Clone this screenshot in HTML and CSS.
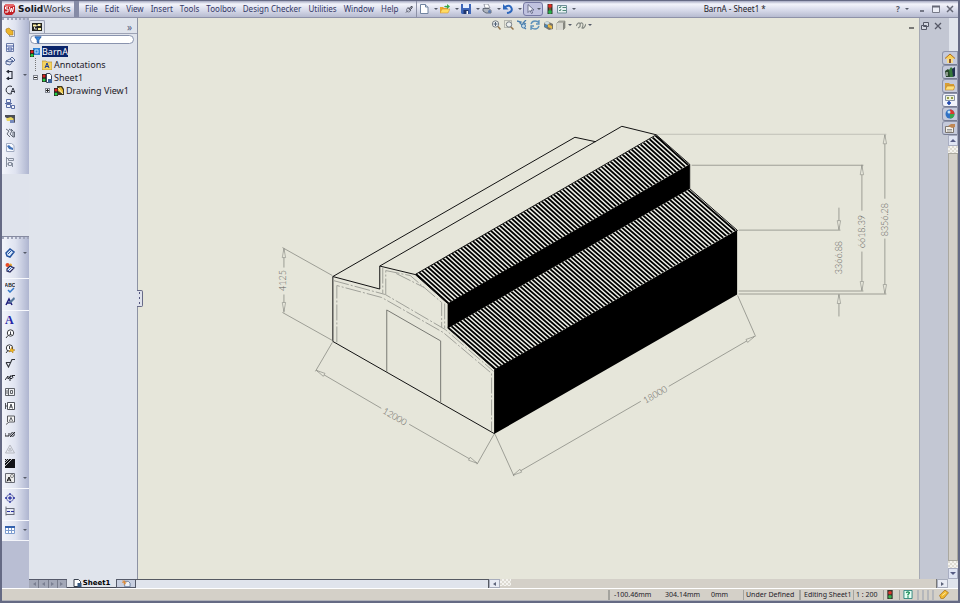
FILE: index.html
```html
<!DOCTYPE html>
<html lang="en">
<head>
<meta charset="utf-8">
<title>BarnA - Sheet1</title>
<link rel="stylesheet" href="styles.css">
</head>
<body>
<header class="titlebar">
  <div class="brand">
    <svg class="logo" viewBox="0 0 12 12" aria-hidden="true"><path d="M1 3 3 1h7l2 2v6l-3 3H3L1 10z" fill="#c11f25"/><path d="M1 3 3 1h7l2 2-5 1z" fill="#e7676a"/><path d="M5 4H2.500v2H5v3H2M6.500 4l1 5 1-4 1 4 1.200-5" fill="none" stroke="#fff"/></svg>
    <span><b>Solid</b>Works</span>
  </div>
  <nav class="menu">
    <button>File</button><button>Edit</button><button>View</button><button>Insert</button><button>Tools</button><button>Toolbox</button><button>Design Checker</button><button>Utilities</button><button>Window</button><button>Help</button>
    <button aria-label="Pin menu"><svg class="pin" viewBox="0 0 8 8"><path d="M1 7.500 3 5.500M3 2.500 6 6M4 4 6 1.500Q8 1 7 3L5 5" fill="#b5b7c6" stroke="#4c4e5c"/><circle cx="3.500" cy="5" r="2" fill="none" stroke="#666978" stroke-width=".8"/></svg></button>
  </nav>
  <div class="tools">
    <button class="split" aria-label="New"><svg viewBox="0 0 10 10"><path d="M1.500.5h5l2.500 2.500v6.500h-7.500z" fill="#fff" stroke="#7184a0"/><path d="M6.500.5v2.500h2.500" fill="#dce5f2" stroke="#7184a0"/></svg><i class="caret"></i></button>
    <button class="split" aria-label="Open"><svg viewBox="0 0 10 10"><path d="M0 3h3l1 1h4v5H0z" fill="#e9a72c"/><path d="M2 5h8L8 9H0z" fill="#ffdc62" stroke="#c9862a" stroke-width=".5"/><path d="M4 3q1-2 3-1V0l3 2.500L7 5V3.500z" fill="#3ba947"/></svg><i class="caret"></i></button>
    <button class="split" aria-label="Save"><svg viewBox="0 0 10 10"><path d="M0 0h10v10H1L0 9z" fill="#3e66b8"/><path d="M2 0h6v4H2z" fill="#e5efff"/><path d="M2.500 6h5v4h-5z" fill="#20376d"/><path d="M5.500 7h1.500v3H5.500z" fill="#fff"/></svg><i class="caret"></i></button>
    <button class="split" aria-label="Print"><svg viewBox="0 0 10 10"><path d="M2 0h4l2 4H3z" fill="#fff" stroke="#747988" stroke-width=".7"/><path d="M1 4.500h6l2 2v2.500H4L1 7z" fill="#aeb4bf" stroke="#4f5563" stroke-width=".8"/><circle cx="7.500" cy="7.500" r="1.500" fill="#5d7cb0"/></svg><i class="caret"></i></button>
    <button class="split" aria-label="Undo"><svg viewBox="0 0 10 10"><path d="M2 3q5-3 6.500 1T4 9" fill="none" stroke="#2c67bd" stroke-width="2"/><path d="M0 0v5.500h5.500z" fill="#2c67bd"/></svg><i class="caret"></i></button>
    <button class="split active" aria-label="Select"><svg viewBox="0 0 10 10"><path d="M3 .5v8l2-2 1.500 3 1.200-.6-1.500-2.900H9z" fill="#eef0fa" stroke="#555b78" stroke-width=".8"/></svg><i class="caret"></i></button>
    <button class="single" aria-label="Rebuild"><svg viewBox="0 0 10 10"><path d="M2.500 0h5v10h-5z" fill="#35332d"/><circle cx="5" cy="2" r="1.900" fill="#e12c24"/><circle cx="5" cy="5" r="1.200" fill="#6b602c"/><circle cx="5" cy="8" r="1.900" fill="#28b04a"/></svg></button>
    <button class="split" aria-label="Options"><svg viewBox="0 0 10 10"><path d="M.5 1.500h9v7.500h-9z" fill="#e7f1f2" stroke="#6d8e98"/><path d="M2 3l1 1 1-2M2 6l1 1 1-2M5.500 3.500H9M5.500 6.500H9" fill="none" stroke="#3b7c67" stroke-width=".9"/></svg><i class="caret"></i></button>
  </div>
  <h1 class="doc">BarnA - Sheet1 *</h1>
  <div class="wincontrols">
    <button class="split" aria-label="Help"><b>?</b><i class="caret"></i></button>
    <button aria-label="Minimize"><svg viewBox="0 0 10 10"><path d="M3 7h4" stroke="#555866" stroke-width="1.500"/></svg></button>
    <button aria-label="Maximize"><svg viewBox="0 0 10 10"><path d="M1.500 2.500h7v6h-7z" fill="#eceef6" stroke="#777a88"/><path d="M1 2.500h8" stroke="#666977" stroke-width="2"/></svg></button>
    <button aria-label="Close"><svg viewBox="0 0 10 10"><path d="M2 2l6 6M8 2 2 8" stroke="#646775" stroke-width="1.500"/></svg></button>
  </div>
</header>

<main class="workspace">
  <aside class="toolbars">
    <div class="bar">
      <div class="group ten">
        <button aria-label="Model view"><svg viewBox="0 0 10 10"><path d="M4.500 3.500h5v6h-5z" fill="#f5f6fa" stroke="#8f96a8"/><path d="M1 2l3-1 2 2 2 1v4L4 8 1 5z" fill="#edb52c" stroke="#a57723" stroke-width=".6"/></svg></button>
        <button aria-label="Projected view"><svg viewBox="0 0 10 10"><path d="M1.500 1.500h7v8h-7z" fill="#edf0fa" stroke="#6b7ba6"/><path d="M1 4h8M3 6h4v2H3z" fill="none" stroke="#4358a0"/></svg></button>
        <button aria-label="Auxiliary view"><svg viewBox="0 0 10 10"><path d="M1 5l4-2 3 2-3 4-4-1zM5 3l2-2 3 3-2 2M1 5l4 1 3-1" fill="#e5eaf9" stroke="#405589" stroke-width=".9"/></svg></button>
        <button class="withcaret" aria-label="Section view"><svg viewBox="0 0 10 10"><path d="M2 1.500h5v7H2M4 0 2 1.500 4 3M4 7 2 8.500 4 10M7 3v4" fill="none" stroke="#232733" stroke-width="1.100"/></svg><i class="caret"></i></button>
        <button aria-label="Detail view"><svg viewBox="0 0 10 10"><path d="M7 1.500A4 4 0 1 0 7 8.500M6 8l2-5 2 5M6.500 6.500h3" fill="none" stroke="#303440"/></svg></button>
        <button aria-label="Standard three view"><svg viewBox="0 0 10 10"><path d="M1.500.5h4v3h-4zM1.500 5.500h4v3h-4zM6.500 6.500h3v3h-3zM0 4.500h7" fill="#f3f5fc" stroke="#4b5f9c" stroke-width=".9"/></svg></button>
        <button aria-label="Broken-out section"><svg viewBox="0 0 10 10"><path d="M0 1h10v8L7 7 0 3z" fill="#4c4e57"/><path d="M1 4.500 6 3l3 2-2 2H2z" fill="#e9d65e"/><path d="M5 6h4v3H5z" fill="#778abc"/></svg></button>
        <button aria-label="Break"><svg viewBox="0 0 10 10"><path d="M1 1l3 2-2 3 3 3M4 1l3 2-2 3 3 3M6 1l2 2M8 4v5h1.500V4z" fill="none" stroke="#565c6a" stroke-width=".9"/></svg></button>
        <button aria-label="Crop view"><svg viewBox="0 0 10 10"><path d="M1.500 1.500h5l2.500 2v6H1.500z" fill="#f8faff" stroke="#a1abc1"/><path d="M2 4l2-1 2 2 2 1v2L4 7z" fill="#4272b7"/></svg></button>
        <button aria-label="Alternate position"><svg viewBox="0 0 10 10"><path d="M1.500 0v10M3.500 1.500h5v2h-5zM3.500 5.500h3v3h-3zM7.500 6v4M1 1.500h2M1 7h2" fill="none" stroke="#858d9d"/></svg></button>
      </div>
    </div>
    <div class="blank"></div>
    <div class="bar lower">
      <div class="group two">
        <button class="withcaret" aria-label="Smart dimension"><svg viewBox="0 0 10 10"><path d="M1 5 5 1l4 3-4 5-3-1z" fill="#dbe9fb" stroke="#24539f" stroke-width="1.500"/><path d="M3 6l3-3" stroke="#24539f"/></svg><i class="caret"></i></button>
        <button aria-label="Model items"><svg viewBox="0 0 10 10"><circle cx="2.500" cy="2" r="2" fill="#e84a25"/><circle cx="5.500" cy="2" r="1.500" fill="#eca92d"/><path d="M2 6l3-3 4 2-4 4-3-1z" fill="#eef0fb" stroke="#29295d" stroke-width="1.200"/><path d="M3 8l4-4" stroke="#356cc0"/></svg></button>
      </div>
      <div class="group two">
        <button aria-label="Spell checker"><svg viewBox="0 0 10 10"><text class="glyph" x="5" y="4" text-anchor="middle">ABC</text><path d="M3 7l2 2 4-4" fill="none" stroke="#3277c9" stroke-width="1.500"/></svg></button>
        <button aria-label="Format painter"><svg viewBox="0 0 10 10"><path d="M1 9 4 3l3 6M2 7h4" fill="none" stroke="#20207c" stroke-width="1.500"/><path d="M4 6l5-5 1 2-4 4z" fill="#52759a"/></svg></button>
      </div>
      <div class="group twelve">
        <button class="note" aria-label="Note"><b>A</b></button>
        <button aria-label="Balloon"><svg viewBox="0 0 10 10"><circle cx="5.500" cy="4" r="3.200" fill="#fff" stroke="#393b41"/><path d="M3 6.500 1 9M5.500 2.500v3M4.500 5.500h2" stroke="#393b41"/></svg></button>
        <button aria-label="Auto balloon"><svg viewBox="0 0 10 10"><circle cx="4.500" cy="4" r="3.200" fill="#fff" stroke="#393b41"/><path d="M3 6.500 1 9M4.500 2v3" stroke="#393b41"/><path d="M7 3v2l3 1-2 1v2L6 7 4 8l1-2z" fill="#f0b71d" stroke="#a8741b" stroke-width=".5"/></svg></button>
        <button aria-label="Surface finish"><svg viewBox="0 0 10 10"><path d="M1 4.500h5M1 4.500 3.500 9 7 1.500h3" fill="none" stroke="#30333a" stroke-width="1.100"/></svg></button>
        <button aria-label="Weld symbol"><svg viewBox="0 0 10 10"><path d="M0 8l3-4v3l3-3M5 9V4h2q2 1 0 2.500H5M7 3.500h3" fill="none" stroke="#25272e"/></svg></button>
        <button aria-label="Geometric tolerance"><svg viewBox="0 0 10 10"><path d="M.5 1.500h9v7h-9zM3.500 2v7M1 4h2M1 6h2M5.500 3.500h2v3h-2z" fill="#eff0f2" stroke="#50535a" stroke-width=".9"/></svg></button>
        <button aria-label="Datum feature"><svg viewBox="0 0 10 10"><path d="M2.500 1.500h7v7h-7zM.5 2v6M.5 5h2M4.500 7.500 6 3l1.500 4.500M5 6h2" fill="#fff" stroke="#3c3f46" stroke-width=".9"/></svg></button>
        <button aria-label="Datum target"><svg viewBox="0 0 10 10"><path d="M2.500 1h7v6H4L1 9.500M2.500 1v6M4.500 6 6 2.500 7.500 6" fill="#f5f5f5" stroke="#47494f" stroke-width=".9"/></svg></button>
        <button aria-label="Hole callout"><svg viewBox="0 0 10 10"><path d="M0 3v3h4V3M5 7l5-5" fill="none" stroke="#24262c"/><circle cx="7.500" cy="4.500" r="1.800" fill="none" stroke="#24262c"/></svg></button>
        <button aria-label="Revision symbol"><svg viewBox="0 0 10 10"><path d="M.5 9 5 1l4.500 8zM3.500 7 5 4l1.500 3z" fill="none" stroke="#b1b3ba" stroke-width=".9"/></svg></button>
        <button aria-label="Area hatch"><svg viewBox="0 0 10 10"><path d="M0 1h10v9H0z" fill="#121317"/><path d="M0 5l4-4M0 8l7-7M0 3l2-2" stroke="#cfd0d3" stroke-width=".9"/></svg></button>
        <button class="withcaret" aria-label="Blocks"><svg viewBox="0 0 10 10"><path d="M.5.5h9v9h-9z" fill="#ededec" stroke="#666972"/><path d="M2 8.500 4 4l2 4.500M2.500 7h3" fill="none" stroke="#111"/><circle cx="7" cy="3" r="1.500" fill="#fff" stroke="#555" stroke-width=".7"/></svg><i class="caret"></i></button>
      </div>
      <div class="group two">
        <button aria-label="Center mark"><svg viewBox="0 0 10 10"><circle cx="5" cy="5" r="3.500" fill="none" stroke="#6a6fae"/><path d="M5 0v2M5 8v2M0 5h2M8 5h2M5 3.200v3.600M3.200 5h3.600" stroke="#2830a0" stroke-width="1.300"/></svg></button>
        <button aria-label="Centerline"><svg viewBox="0 0 10 10"><path d="M1 .5v9M1 2.500h8M1 8.500h8M9 2v7" fill="none" stroke="#686c7a"/><path d="M2 5.500h8" stroke="#2830a0" stroke-dasharray="3 1"/></svg></button>
      </div>
      <div class="group one">
        <button class="withcaret" aria-label="Tables"><svg viewBox="0 0 10 10"><path d="M.5 2.500h9v6h-9zM.5 5.500h9M3.500 2v7M6.500 2v7" fill="#fff" stroke="#7d9cce"/><path d="M0 2h10" stroke="#3462ad" stroke-width="2"/></svg><i class="caret"></i></button>
      </div>
    </div>
  </aside>

  <section class="center">
    <div class="work">
      <section class="tree">
        <div class="treetabs">
          <button class="treetab" aria-label="Feature tree"><svg viewBox="0 0 10 10"><path d="M0 1h10v8H0z" fill="#25251e"/><path d="M1 2.500h3v2H1zM6 2h2.500v2H6zM6 6h3v2H6z" fill="#fff2a2"/><path d="M2.500 5v2h2.500M4 4l2-1" stroke="#fff" stroke-width=".8" fill="none"/></svg></button>
          <button class="more" aria-label="Expand">»</button>
        </div>
        <label class="filter"><svg viewBox="0 0 10 10"><path d="M1 1h8L6 5v4l-2-1V5z" fill="#3a8be0" stroke="#164f9e"/></svg><input type="text" aria-label="Filter"></label>
        <ul class="nodes">
          <li class="root"><svg viewBox="0 0 10 10"><path d="M3 1h7v7H3z" fill="#2e81d4"/><path d="M5 3h3v3H5z" fill="none" stroke="#b6dcff"/><path d="M0 3h4v7H0z" fill="#28251f"/><circle cx="2" cy="4.700" r="1.500" fill="#d22"/><circle cx="2" cy="8.300" r="1.500" fill="#2c4"/></svg><span class="selected">BarnA</span></li>
          <li class="level1"><i class="branch"></i><svg viewBox="0 0 10 10"><path d="M0 1h4l1 1h5v8H0z" fill="#f4d362" stroke="#b89132" stroke-width=".7"/><path d="M3 8 5 3l2 5M4 6.500h2" fill="none" stroke="#183a94"/></svg><span>Annotations</span></li>
          <li class="level1"><i class="box minus"></i><svg viewBox="0 0 10 10"><path d="M4.500.5H8l1.500 2v7h-5z" fill="#fff" stroke="#3b4357"/><path d="M6 6h4v4H6z" fill="#3b619a"/><path d="M0 1h4v8H0z" fill="#28251f"/><circle cx="2" cy="3" r="1.500" fill="#d22"/><circle cx="2" cy="7" r="1.500" fill="#2c4"/></svg><span>Sheet1</span></li>
          <li class="level2"><i class="box plus"></i><svg viewBox="0 0 10 10"><path d="M3 0h5l2 3v6H4z" fill="#3d3721"/><path d="M4 2l3-1 2 3v4L4 5z" fill="#e7ba32"/><path d="M4 2l5 6" stroke="#fff6c0"/><path d="M0 2h4v8H0z" fill="#28251f"/><circle cx="2" cy="4" r="1.500" fill="#d22"/><circle cx="2" cy="8" r="1.500" fill="#2c4"/></svg><span>Drawing View1</span></li>
        </ul>
        <button class="handle" aria-label="Collapse panel"><i></i><i></i><i></i></button>
      </section>
      <section class="canvas">
        <svg class="drawing" viewBox="138 17 781 562" preserveAspectRatio="xMidYMid meet" role="img" aria-label="Barn, isometric view">
          <defs><path id="arrow" d="M0 0 9-1.700v3.400z"/></defs>
          <path d="M415 274 656.500 134 690 164 447.500 303z" fill="#eef0e8"/>
          <path d="M447.500 328 690 188 737.500 229.500 494.500 369z" fill="#eef0e8"/>
          <g class="roof">
            <path transform="matrix(1 -.5773 32.500 29.300 415 274)" d="M0 .5H242"/>
            <path transform="matrix(1 -.5773 47.200 41.200 447.500 328)" d="M0 .5H242.500"/>
          </g>
          <path d="M447.500 303 690 163.500V188L447.500 328zM494.500 369 737.500 229.500V294L494.500 433.500z"/>
          <g class="edge">
            <path d="M332.500 341V276L575 136.500 596 141M332.500 276 379.500 288.500V265.500L622 125.500 656.500 134 690 163.500V188L738 230M379.500 265.500 415 274 656.500 134M415 274 447.500 303M447.500 327 494.500 369V433.500L332.500 341"/>
          </g>
          <g class="hidden">
            <path d="M336.500 342V285L381.500 297 443 332 491.500 373V431"/>
            <path d="M333 280 385 294 445 329 493.500 371"/>
            <path d="M382.500 267V293M385.500 294V270L410 275 441.500 302V327M444.500 303V328M396 273 424 287"/>
          </g>
          <path class="door" d="M386.500 371.500V309.500L440.500 340.500V402.500"/>
          <g class="dim">
            <path d="M332 275 282 247M332 340 282 312M283.500 248V267M283.500 294V312"/>
            <path d="M332 342 315 371M494 434 477 464M316 370 381 408M409 424 477 463"/>
            <path d="M495 434 514 476M738 295 756 336M513 475 641 401M669 386 755 336"/>
            <path d="M739 229.500H841M839.500 207V229M839.500 294V316"/>
            <path d="M692 164.500H864M739 290.500H864M862.500 164V210M862.500 251V290"/>
            <path d="M739 293.500H887M885.500 134V198M885.500 238V293"/>
            <path class="faint" d="M657 133.500H887"/>
          </g>
          <g class="heads">
            <use href="#arrow" transform="translate(283.500 248) rotate(90)"/>
            <use href="#arrow" transform="translate(283.500 311) rotate(-90)"/>
            <use href="#arrow" transform="translate(316 370) rotate(30)"/>
            <use href="#arrow" transform="translate(477 463) rotate(210)"/>
            <use href="#arrow" transform="translate(513 475) rotate(-30)"/>
            <use href="#arrow" transform="translate(755 336) rotate(150)"/>
            <use href="#arrow" transform="translate(839.500 229) rotate(-90)"/>
            <use href="#arrow" transform="translate(839.500 294) rotate(90)"/>
            <use href="#arrow" transform="translate(862.500 165) rotate(90)"/>
            <use href="#arrow" transform="translate(862.500 290) rotate(-90)"/>
            <use href="#arrow" transform="translate(885.500 134) rotate(90)"/>
            <use href="#arrow" transform="translate(885.500 293) rotate(-90)"/>
          </g>
          <g class="dimtext">
            <text transform="translate(286 280) rotate(-90)">4125</text>
            <text transform="translate(393 419) rotate(30)">12000</text>
            <text transform="translate(657 397) rotate(-30)">18000</text>
            <text transform="translate(843 257) rotate(-90)">3366.88</text>
            <text transform="translate(866 231) rotate(-90)">6618.39</text>
            <text transform="translate(889 219) rotate(-90)">8356.28</text>
          </g>
        </svg>
        <div class="viewtools">
          <button aria-label="Zoom to fit"><svg viewBox="0 0 10 10"><circle cx="4.500" cy="4" r="3.200" fill="#eef1ef" stroke="#777e85"/><path d="M7 6.500 9.500 9.500" stroke="#94754c" stroke-width="1.500"/><path d="M2.500 4h4M4.500 2v4" stroke="#4d5e75"/></svg></button>
          <button aria-label="Zoom to area"><svg viewBox="0 0 10 10"><path d="M.5.500h7v7h-7z" fill="none" stroke="#8a8d88" stroke-dasharray="1 1"/><circle cx="5" cy="4.500" r="2.700" fill="#edf0ef" stroke="#777e85"/><path d="M7 7l2.500 2.500" stroke="#94754c" stroke-width="1.500"/></svg></button>
          <button aria-label="Previous view"><svg viewBox="0 0 10 10"><path d="M0 1l4 1-1 1 3 3V3l3-3M5 6l4 3M7 3l2 1" fill="none" stroke="#497eae" stroke-width="1.300"/><circle cx="6.500" cy="6" r="2" fill="#c5dbe9" stroke="#497eae"/></svg></button>
          <button aria-label="Rotate view"><svg viewBox="0 0 10 10"><path d="M1 4q1-3 4-3t4 2M9 0v4H6M9 6q-1 3-4 3T1 7M1 10V6h3" fill="none" stroke="#5f91ba" stroke-width="1.300"/></svg></button>
          <button aria-label="Section"><svg viewBox="0 0 10 10"><path d="M1 3l3-2 6 3v5L6 10 1 7z" fill="#77746a"/><path d="M1 3l3-2 3 2-3 2z" fill="#cddde2"/><path d="M5 4l4 2v3L5 7z" fill="#e6b946"/><circle cx="3" cy="6" r="1.500" fill="#4485b9"/></svg></button>
          <button class="viewcaret" aria-label="Display style"><svg viewBox="0 0 10 10"><path d="M1 3l2-2h6v7L7 10H1z" fill="#b1b1a8" stroke="#888981" stroke-width=".7"/><path d="M1 3h6v7H1z" fill="#d8d8d0"/><path d="M7 3l2-2v7l-2 2z" fill="#85867f"/></svg><i class="caret"></i></button>
          <button class="viewcaret" aria-label="Hide or show"><svg viewBox="0 0 10 10"><path d="M0 6q3-5 4-2T2 8M4 7q0-5 2-4t0 5q2 1 4-4" fill="none" stroke="#858a84" stroke-width="1.100"/></svg><i class="caret"></i></button>
        </div>
      </section>
      <aside class="taskpane">
        <div class="childcontrols">
          <button aria-label="Minimize document"><svg viewBox="0 0 10 10"><path d="M2 7h5" stroke="#555" stroke-width="1.500"/></svg></button>
          <button aria-label="Restore document"><svg viewBox="0 0 10 10"><path d="M3.500 1.500h5v4h-5zM1.500 4.500h5v4h-5z" fill="#d5d9e2" stroke="#555866"/></svg></button>
          <button aria-label="Close document"><svg viewBox="0 0 10 10"><path d="M2 2l6 6M8 2 2 8" stroke="#555866" stroke-width="1.300"/></svg></button>
        </div>
        <div class="tasktabs">
          <button aria-label="Resources"><svg viewBox="0 0 10 10"><path d="M2 5h6v5H2z" fill="#f4d98d"/><path d="M0 5.500 5 1l5 4.500" fill="#f9ce4f" stroke="#b06c1b"/><path d="M4 6h2v4H4z" fill="#915828"/></svg></button>
          <button aria-label="Design library"><svg viewBox="0 0 10 10"><path d="M0 4l3-2 2 2v6H1z" fill="#27462b"/><path d="M4 3l2-3 2 2v8H5z" fill="#35783a"/><path d="M7 2l3-2v9l-2 1z" fill="#202f50"/><path d="M2 5v4" stroke="#eee"/></svg></button>
          <button aria-label="File explorer"><svg viewBox="0 0 10 10"><path d="M0 2h4l1 1h4v6H0z" fill="#d79d33"/><path d="M2 5h8L8.500 9H0z" fill="#ffe07c" stroke="#b88228" stroke-width=".6"/></svg></button>
          <button class="on" aria-label="View palette"><svg viewBox="0 0 10 10"><path d="M.5.500h9v5h-9z" fill="#eef2da" stroke="#8793a7"/><path d="M2 2h2v2H2zM6 2h2v2H6z" fill="#929e4b"/><path d="M4 6v4M2 8h4" stroke="#153fab" stroke-width="1.500"/></svg></button>
          <button aria-label="Appearances"><svg viewBox="0 0 10 10"><circle cx="5" cy="5" r="4.500" fill="#3072c4"/><path d="M5 5V.5A4.500 4.500 0 0 1 9.500 5z" fill="#da3a2e"/><path d="M5 5h4.500A4.500 4.500 0 0 1 5 9.500z" fill="#39a64b"/><circle cx="4" cy="3" r="1.500" fill="#c6e2f4"/></svg></button>
          <button aria-label="Custom properties"><svg viewBox="0 0 10 10"><path d="M.5 3.500h8v6h-8z" fill="#f4f1e9" stroke="#7d7770"/><path d="M3 3l3-2h4v3L7 5z" fill="#bf8754"/><path d="M2 6.500h5M2 8h5" stroke="#999"/></svg></button>
        </div>
        <div class="vscroll"><button class="up" aria-label="Scroll up"></button><span class="dither"></span><span class="thumb"></span><span class="dither"></span><button class="down" aria-label="Scroll down"></button></div>
      </aside>
    </div>
    <div class="sheetbar">
      <div class="sheetnav"><button aria-label="First"><i class="left"></i></button><button aria-label="Previous"><i class="left"></i></button><button aria-label="Next"><i class="right"></i></button><button aria-label="Last"><i class="right"></i></button></div>
      <button class="sheettab"><svg viewBox="0 0 8 8"><path d="M.5.500H5l2 2v5H.5z" fill="#fff" stroke="#39414e"/><path d="M4 4h4v4H4z" fill="#35577e"/></svg>Sheet1</button>
      <button class="addsheet" aria-label="Add sheet"><svg viewBox="0 0 10 8"><path d="M3 1h4l2 2v4H3z" fill="#edf1f8" stroke="#65799a"/><path d="M0 2h5M2.500 0v5M1 0l3 4" stroke="#e2882c"/></svg></button>
      <span class="sheetrest"></span>
      <div class="hscroll"><button aria-label="Scroll left"><i class="left"></i></button><span class="dither"></span><span class="track"></span><button aria-label="Scroll right"><i class="right"></i></button></div>
      <span class="corner"></span>
    </div>
  </section>
</main>

<footer class="status">
  <span class="cell xpos">-100.46mm</span><span class="ypos">304.14mm</span><span class="zpos">0mm</span>
  <span class="cell defined">Under Defined</span><span class="cell editing">Editing Sheet1</span><span class="cell scale">1 : 200</span>
  <span class="cell sicon"><svg viewBox="0 0 10 10"><path d="M2 0h6v10H2z" fill="#39372f"/><circle cx="5" cy="3" r="2" fill="#dc342b"/><circle cx="5" cy="7.500" r="2" fill="#36ae4d"/></svg></span>
  <span class="cell shelp"><svg viewBox="0 0 10 10"><path d="M.5.500h9v9h-9z" fill="#e7fff3" stroke="#278179"/><path d="M3 3q2-2 3.500 0Q6 4.500 5 5v1M5 7v1.500" fill="none" stroke="#198b54" stroke-width="1.500"/></svg></span>
  <span class="grip"></span>
  <span class="tag"><svg viewBox="0 0 10 10"><path d="M0 6 6 0l4 3-5 6-3 1z" fill="#f0b933" stroke="#a36c15" stroke-width=".8"/><path d="M3 6l4-3" stroke="#fff1b0"/></svg></span>
</footer>
</body>
</html>
```
FILE: styles.css
```css
* { box-sizing: border-box; }
html, body { height: 100%; margin: 0; }
body {
  display: flex;
  flex-direction: column;
  overflow: hidden;
  background: #e0e4ec;
  border: solid #656a84;
  border-width: 1px 2px 2px;
  color: #1d2028;
  font: 9px/12px "Noto Sans", sans-serif;
}
button, input { margin: 0; padding: 0; border: 0; background: none; color: inherit; font: inherit; }
button { display: flex; align-items: center; justify-content: center; }
svg { display: block; flex: none; width: 10px; height: 10px; }
.caret { flex: none; border: 2px solid transparent; border-top-color: #555a68; border-bottom: 0; }

/* Title bar */
.titlebar {
  display: flex;
  flex: none;
  height: 17px;
  background: linear-gradient(#a6aac2, #f3f4fb 3px, #d5d8e8 60%, #b7bbd0);
  border-bottom: 1px solid #8e92a8;
  font-size: 8px;
}
.brand { display: flex; align-items: center; gap: 3px; width: 77px; padding-left: 1px; border-right: 5px solid #858ba6; font: 9px/12px "DejaVu Sans", sans-serif; color: #34353e; }
.brand b { color: #17181d; }
.logo { width: 12px; height: 12px; }
.menu { display: flex; gap: 7px; padding: 0 3px 0 6px; color: #343866; border-right: 1px solid #8d91a6; }
.pin { width: 8px; height: 8px; }
.tools { display: flex; align-items: center; padding-left: 1px; }
.split { gap: 5px; width: 21px; height: 14px; }
.split.active { gap: 2px; width: 20px; border: 1px solid #777aa4; border-radius: 3px; background: #c0c2df; }
.single { width: 13px; }
.doc { flex: 1; margin: 0; font-size: 8px; font-weight: 400; line-height: 16px; text-align: center; }
.wincontrols { display: flex; align-items: center; gap: 4px; padding-right: 3px; color: #555866; }

/* Left toolbars */
.workspace { display: flex; flex: 1; min-height: 0; }
.toolbars { display: flex; flex: none; flex-direction: column; width: 27px; background: #b9bed3; }
.bar { padding: 5px 0; background: linear-gradient(90deg, #f3f5fb, #dfe3f0 50%, #aeb5d0); border-top: 2px dotted #a1a6bb; }
.blank { height: 63px; background: #dfe3ec; border-bottom: 1px solid #858aa0; }
.lower { padding: 7px 0 3px; border-bottom: 1px solid #f4f5fa; }
.group { display: grid; grid-auto-rows: 1fr; }
.ten { height: 144px; }
.group button { justify-content: flex-start; padding-left: 3px; gap: 7px; }
.lower .group + .group { margin-top: 3px; padding-top: 2px; border-top: 1px solid #f8f9fd; }
.two { min-height: 29px; }
.twelve { height: 175px; }
.one { min-height: 17px; }
.withcaret .caret { margin-left: 1px; }
.note { color: #2424a5; font: 12px/12px "Liberation Serif", serif; }
.glyph { font: 700 5px "Liberation Sans", sans-serif; fill: #222; }

/* Feature tree */
.center { display: flex; flex: 1; flex-direction: column; min-width: 0; }
.work { display: flex; flex: 1; min-height: 0; }
.tree { position: relative; flex: none; width: 109px; background: #e0e4ec; border-right: 1px solid #8d92a3; }
.treetabs { display: flex; justify-content: space-between; height: 16px; padding-top: 2px; border-bottom: 1px solid #9da2b4; }
.treetab { width: 16px; border: 1px solid #9a9fb1; border-bottom: 0; border-radius: 2px 2px 0 0; }
.more { padding-right: 5px; color: #565e7e; font-size: 10px; }
.filter { display: flex; align-items: center; height: 9px; margin: 1px 3px 0 1px; padding-left: 3px; border: 1px solid #8993ae; border-radius: 5px; background: #fff; }
.filter svg { width: 8px; height: 8px; }
.filter input { flex: 1; min-width: 0; height: 7px; outline: 0; }
.nodes { margin: 1px 0 0; padding: 0; list-style: none; }
.nodes li { display: flex; align-items: center; gap: 2px; height: 13px; white-space: nowrap; }
.root { padding-left: 1px; }
.level1 { padding-left: 4px; }
.level2 { padding-left: 16px; }
.selected { height: 11px; background: #0a246a; color: #fff; line-height: 11px; }
.branch, .box { flex: none; width: 5px; height: 5px; margin-right: 2px; }
.branch { width: 3px; height: 13px; margin-left: 2px; border-left: 1px dotted #777; }
.box { border: 1px solid #81858f; background: linear-gradient(#222, #222) center / 3px 1px no-repeat #f4f5f8; }
.plus { background: linear-gradient(#222, #222) center / 3px 1px no-repeat, linear-gradient(#222, #222) center / 1px 3px no-repeat, #f4f5f8; }
.handle { position: absolute; top: calc(50% - 9px); right: -6px; z-index: 1; flex-direction: column; gap: 3px; width: 6px; height: 17px; border: 1px solid #686b88; border-left: 0; border-radius: 0 2px 2px 0; background: #dfe2ec; }
.handle i { width: 1px; height: 2px; background: #54577e; }

/* Drawing area */
.canvas { position: relative; flex: 1; min-width: 0; background: #e6e6da; }
.drawing { width: 100%; height: 100%; }
.roof { fill: none; stroke: #000; stroke-dasharray: 1.65 1.35; }
.edge { fill: none; stroke: #111; }
.hidden { fill: none; stroke: #a0a19a; stroke-dasharray: 16 2 2 2; }
.door { fill: none; stroke: #777872; }
.dim { fill: none; stroke: #8a8b84; stroke-width: .8; }
.dim .faint { stroke: #b7b8ae; }
.heads { fill: #e6e6da; stroke: #8a8b84; stroke-width: .6; }
.dimtext { fill: #5f605b; font: 300 9px "Lato", sans-serif; text-anchor: middle; }
.viewtools { position: absolute; top: 2px; left: calc(50% - 38px); display: flex; gap: 3px; }
.viewcaret { gap: 2px; margin-right: 1px; }

/* Task pane */
.taskpane { position: relative; display: flex; flex: none; flex-direction: column; align-items: flex-end; width: 39px; background: linear-gradient(90deg, #c3c7d3 29px, #e0e4ec 29px); border-left: 1px solid #a5a9b3; }
.childcontrols { position: absolute; top: 3px; right: 15px; display: flex; gap: 3px; }
.tasktabs { width: 16px; margin-top: 33px; }
.tasktabs button { width: 100%; height: 14px; border: 1px solid #8d93aa; border-bottom-color: #777d93; border-radius: 3px 0 0 3px; background: #c5cadb; }
.tasktabs .on { background: #f1f4fb; }
.vscroll { display: flex; flex: 1; flex-direction: column; width: 10px; }
.vscroll button { height: 11px; border: 1px solid #a9aec2; background: #dfe4f3; }
.up::before, .down::before { content: ""; border: 3px solid transparent; }
.up::before { border-top: 0; border-bottom-color: #565c85; }
.down::before { border-bottom: 0; border-top-color: #565c85; }
.dither { flex: none; width: 11px; height: 7px; background: repeating-conic-gradient(#f4f3ef 0 25%, #dedbd3 0 50%) 0 0 / 4px 4px; }
.vscroll .dither { width: 10px; }
.thumb { flex: 1; border: 1px solid #aaa89f; background: #d4d0c8; }

/* Sheet bar */
.sheetbar { display: flex; flex: none; height: 9px; background: #e0e4ec; font: 700 7px/8px "DejaVu Sans", sans-serif; }
.sheetnav { display: flex; width: 38px; padding-left: 1px; background: #a3a8b8; border-top: 1px solid #55596a; }
.sheetnav button { flex: 1; border-right: 1px solid #777c8c; }
.left, .right { width: 0; border: 2px solid transparent; }
.left { border-left: 0; border-right: 3px solid #5e647b; }
.right { border-right: 0; border-left: 3px solid #5e647b; }
.sheetnav .left { border-right-color: #7b8093; }
.sheetnav .right { border-left-color: #7b8093; }
.sheettab { gap: 1px; width: 49px; border-bottom: 1px solid #454956; color: #000; }
.sheettab svg, .addsheet svg { width: 9px; height: 8px; }
.addsheet { width: 20px; border: 1px solid #555a69; background: #c8cfe0; }
.sheetrest { flex: 352; border-top: 1px solid #555962; border-right: 1px solid #555962; }
.hscroll { display: flex; flex: 460; background: #d4d0c8; }
.hscroll button { width: 11px; border: 1px solid #a8adbc; background: #e8ebf4; }
.track { flex: 1; border-right: 1px solid #777; }
.corner { width: 10px; }

/* Status bar */
.status { display: flex; flex: none; align-items: center; justify-content: flex-end; height: 13px; background: #d4d0c8; border-top: 1px solid #fff; border-bottom: 1px solid #b0b2b9; font-size: 7px; line-height: 10px; white-space: nowrap; }
.cell { height: 10px; border-left: 1px solid #a4a39e; }
.xpos { width: 57px; padding-left: 4px; border-left-width: 2px; }
.ypos { width: 46px; }
.zpos { width: 32px; }
.defined { width: 56px; padding-left: 2px; }
.editing { width: 54px; padding-left: 3px; border-left-width: 2px; }
.scale { width: 30px; padding-left: 2px; }
.sicon { width: 16px; padding-left: 1px; }
.shelp { width: 18px; padding-left: 3px; }
.status svg { height: 9px; }
.grip { width: 20px; height: 10px; background: repeating-linear-gradient(90deg, #b5b7bb 0 2px, #d4d0c8 2px 5px); }
.tag { padding: 0 9px 0 2px; }
```
